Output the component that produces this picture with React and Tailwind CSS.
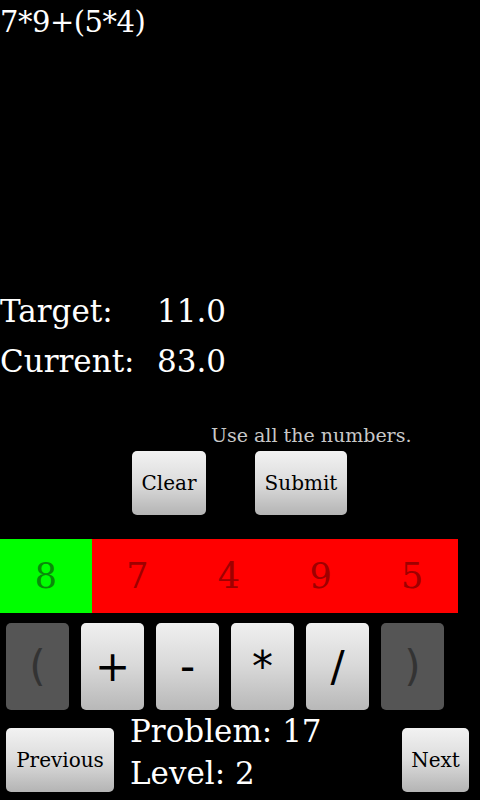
import React from 'react';

const serif = { fontFamily: '"DejaVu Serif", "Liberation Serif", serif' };

const Btn = ({ children, className = '' }) => (
  <div
    className={`flex items-center justify-center rounded-[5px] bg-gradient-to-b from-[#f2f2f2] via-[#dcdcdc] to-[#b4b4b4] text-black text-[20px] ${className}`}
  >
    {children}
  </div>
);

const Op = ({ label, disabled }) => (
  <div
    className={`flex items-center justify-center w-[63px] h-[87px] rounded-[5px] text-[42px] ${
      disabled
        ? 'bg-[#555555] text-[#333333]'
        : 'bg-gradient-to-b from-[#f0f0f0] via-[#d8d8d8] to-[#b8b8b8] text-black'
    }`}
    style={{ fontFamily: '"DejaVu Sans", "Liberation Sans", sans-serif' }}
  >
    {label}
  </div>
);

export default function App() {
  const numbers = [8, 7, 4, 9, 5];
  const used = [true, false, false, false, false];

  return (
    <div className="w-[480px] h-[800px] bg-black text-white overflow-hidden" style={serif}>
      <div className="h-[44px] text-[29px] leading-[44px] tracking-[-0.5px]">7*9+(5*4)</div>

      <div className="mt-[242px]">
        <div className="flex h-[50px] items-center text-[31px]">
          <span className="w-[157px]">Target:</span>
          <span>11.0</span>
        </div>
        <div className="flex h-[50px] items-center text-[31px]">
          <span className="w-[157px]">Current:</span>
          <span>83.0</span>
        </div>
      </div>

      <div className="mt-[34px] pl-[211px] h-[30px] text-[19px] text-[#c8c8c8] leading-[30px]">
        Use all the numbers.
      </div>

      <div className="flex mt-[1px] h-[64px]">
        <Btn className="ml-[132px] w-[74px] h-[64px]">Clear</Btn>
        <Btn className="ml-[49px] w-[92px] h-[64px]">Submit</Btn>
      </div>

      <div className="mt-[24px] w-[458px] h-[74px] grid grid-cols-5 text-[35px]">
        {numbers.map((n, i) => (
          <div
            key={i}
            className={`flex items-center justify-center ${
              used[i] ? 'bg-[#00ff00] text-[#0a8a0a]' : 'bg-[#ff0000] text-[#9e0000]'
            }`}
          >
            {n}
          </div>
        ))}
      </div>

      <div className="flex gap-[12px] pl-[6px] mt-[10px]">
        <Op label="(" disabled />
        <Op label="+" />
        <Op label="-" />
        <Op label="*" />
        <Op label="/" />
        <Op label=")" disabled />
      </div>

      <div className="flex items-end h-[90px]">
        <Btn className="ml-[6px] mb-[8px] w-[108px] h-[64px]">Previous</Btn>
        <div className="ml-[16px] flex flex-col text-[31px] leading-[42px] pb-[6px]">
          <span>Problem: 17</span>
          <span>Level: 2</span>
        </div>
        <Btn className="ml-auto mr-[11px] mb-[8px] w-[67px] h-[64px]">Next</Btn>
      </div>
    </div>
  );
}
